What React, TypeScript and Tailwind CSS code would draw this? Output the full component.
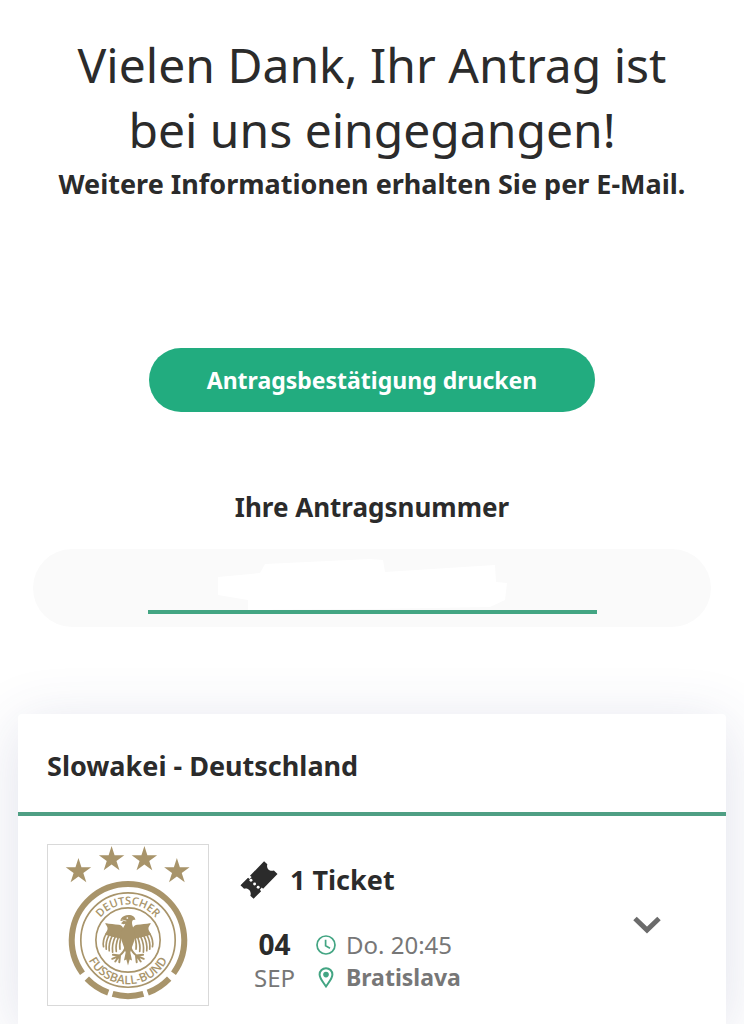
import React from "react";

const GOLD = "#a8946a";

const STARS: [number, number][] = [
  [115, 102],
  [214, 66],
  [312, 66],
  [409, 102],
];

function starPoints(cx: number, cy: number, r: number) {
  return Array.from({ length: 10 }, (_, i) => {
    const radius = i % 2 === 0 ? r : r * 0.38;
    const a = (Math.PI / 5) * i - Math.PI / 2;
    return `${(cx + radius * Math.cos(a)).toFixed(1)},${(cy + radius * Math.sin(a)).toFixed(1)}`;
  }).join(" ");
}

function Wing() {
  return (
    <>
      <path
        d="M253 279 C248 270 246 262 236 261 C222 260 210 259 195 256 C196 262 203 266 202 274 C201 280 196 284 195 291 L216 297 L242 303 L254 300 Z"
        fill={GOLD}
      />
      <path
        d="M198 288 C191 300 187 314 190 327 M207 291 C200 304 196 319 198 334 M216 294 C209 308 205 324 207 339 M225 297 C219 310 215 327 217 343 M234 299 C229 312 226 328 228 341 M242 300 C239 311 237 323 239 334"
        fill="none"
        stroke={GOLD}
        strokeWidth="5"
        strokeLinecap="round"
      />
      <path
        d="M256 326 C253 338 247 346 238 353 M238 353 L218 351 M236 354 L216 363 M237 354 L225 371 M239 354 L237 373"
        fill="none"
        stroke={GOLD}
        strokeWidth="6"
        strokeLinecap="round"
      />
    </>
  );
}

function Crest() {
  return (
    <svg viewBox="24 23 478 478" className="size-full" role="img" aria-label="Deutscher Fussball-Bund">
      <defs>
        <path id="crest-top" d="M157 307 A106 106 0 0 1 369 307" />
        <path id="crest-bottom" d="M131 307 A132 132 0 0 0 395 307" />
      </defs>
      {STARS.map(([x, y]) => (
        <polygon key={x} points={starPoints(x, y, 40)} fill={GOLD} />
      ))}
      <g fill="none" stroke={GOLD}>
        <path
          d="M127 406 A168 168 0 1 1 399 406 M386 422 A168 168 0 0 1 322 464 M309 468 A168 168 0 0 1 217 468 M204 464 A168 168 0 0 1 140 422"
          strokeWidth="18"
        />
        <circle cx="263" cy="307" r="141" strokeWidth="5" />
        <circle cx="263" cy="307" r="96" strokeWidth="5" />
      </g>
      <g fill={GOLD} fontFamily="'Open Sans', sans-serif" fontWeight="600" textAnchor="middle">
        <text fontSize="33">
          <textPath href="#crest-top" startOffset="50%">DEUTSCHER</textPath>
        </text>
        <text fontSize="36">
          <textPath href="#crest-bottom" startOffset="50%">FUSSBALL-BUND</textPath>
        </text>
      </g>
      <Wing />
      <g transform="translate(526 0) scale(-1 1)">
        <Wing />
      </g>
      <path
        d="M242 243 C247 236 255 232 265 232 C276 232 284 237 285 247 C279 244 275 248 275 255 C275 266 284 278 284 293 C283 313 274 326 270 344 L275 368 L268 365 L263 383 L258 365 L251 368 L256 344 C252 326 243 313 242 293 C242 278 251 268 255 258 C251 260 246 260 242 257 L249 251 L240 249 Z"
        fill={GOLD}
      />
      <path d="M244 247 L258 250" stroke="#fff" strokeWidth="2" />
      <circle cx="261" cy="241" r="2.5" fill="#fff" />
    </svg>
  );
}

function TicketIcon() {
  return (
    <svg viewBox="29 32 115 116" className="size-[38px] shrink-0" aria-hidden="true">
      <path
        d="M102 33 L112 42 C108 53 118 66 132 61 L143 72 L99 117 L95 113 L89 120 L93 124 L70 147 L60 138 C65 126 54 112 41 117 L30 106 L53 83 L58 87 L64 81 L59 77 Z"
        fill="#2b2b2b"
      />
      <g fill="#fff">
        <circle cx="62" cy="91" r="4.5" />
        <circle cx="73" cy="102" r="4.5" />
        <circle cx="84" cy="112" r="4.5" />
      </g>
    </svg>
  );
}

function ClockIcon() {
  return (
    <svg viewBox="0 0 20 20" className="size-5" fill="none" stroke="#43a583" strokeWidth="1.7" aria-hidden="true">
      <circle cx="10" cy="10" r="9" />
      <path d="M9.6 4.8v6l4.4 2.4" />
    </svg>
  );
}

function PinIcon() {
  return (
    <svg viewBox="0 0 16 21" className="h-[21px] w-4" aria-hidden="true">
      <path
        d="M8 19.4C5 15 1.6 11.6 1.6 7.6a6.4 6.4 0 0 1 12.8 0C14.4 11.6 11 15 8 19.4Z"
        fill="none"
        stroke="#43a583"
        strokeWidth="2"
      />
      <circle cx="8" cy="7.6" r="2.8" fill="#43a583" />
    </svg>
  );
}

export default function App() {
  return (
    <main className="min-h-screen overflow-hidden bg-white px-[18px] pt-8 font-['Noto_Sans',sans-serif] text-[#2b2b2b]">
      <header className="text-center">
        <h1 className="text-[48px] leading-[65px]">
          Vielen Dank, Ihr Antrag ist
          <br />
          bei uns eingegangen!
        </h1>
        <p className="mt-[2px] text-[27px] leading-10 font-bold">Weitere Informationen erhalten Sie per E-Mail.</p>
      </header>

      <div className="mt-36 flex justify-center">
        <button type="button" className="h-16 w-[446px] max-w-full rounded-full bg-[#22ac7f] text-[23px] font-bold text-white">
          Antragsbestätigung drucken
        </button>
      </div>

      <section className="mt-[75px] flex flex-col items-center px-[15px]">
        <label htmlFor="request-number" className="text-[26px] leading-10 font-bold">
          Ihre Antragsnummer
        </label>
        <div className="relative mt-[22px] flex h-[78px] w-full justify-center rounded-full bg-[#fafafa]">
          <input
            id="request-number"
            readOnly
            className="h-[65px] w-[449px] max-w-full border-b-4 border-[#43a583] bg-transparent text-center text-[27px] outline-none"
          />
          <svg viewBox="0 0 289 51" className="absolute top-[10px] left-1/2 h-[51px] w-[289px] -translate-x-[154px]" aria-hidden="true">
            <path
              d="M0 18 L42 14 L47 5 L152 0 L165 1 L167 13 L277 6 L278 23 L289 24 L287 41 L272 48 L152 50 L30 51 L30 41 L0 36 Z"
              fill="#fff"
            />
          </svg>
        </div>
      </section>

      <article className="mt-[87px] rounded-t bg-white shadow-[0_10px_60px_rgba(60,70,130,0.16)]">
        <h2 className="border-b-4 border-[#4f9f84] px-[29px] pt-8 pb-[26px] text-[27px] leading-10 font-bold">
          Slowakei - Deutschland
        </h2>
        <div className="flex items-center px-[29px] pt-[28px] pb-[18px]">
          <div className="size-[162px] shrink-0 border border-[#d9d9d9]">
            <Crest />
          </div>
          <div className="ml-[31px] flex-1 pt-1">
            <div className="flex items-center gap-3 text-[27px] leading-10 font-bold">
              <TicketIcon />
              1 Ticket
            </div>
            <div className="mt-7 flex gap-[18px]">
              <div className="w-[58px] pl-[11px] text-center leading-[33px]">
                <div className="text-[28px] font-bold">04</div>
                <div className="text-[24px] text-[#777]">SEP</div>
              </div>
              <div className="text-[24px] leading-[33px] text-[#777]">
                <div className="flex items-center gap-[10px]">
                  <span className="flex w-5 justify-center">
                    <ClockIcon />
                  </span>
                  Do. 20:45
                </div>
                <div className="flex items-center gap-[10px] text-[23px] font-bold">
                  <span className="flex w-5 justify-center">
                    <PinIcon />
                  </span>
                  Bratislava
                </div>
              </div>
            </div>
          </div>
          <button type="button" aria-label="Details anzeigen" className="mr-9 shrink-0">
            <svg viewBox="0 0 28 18" className="h-[18px] w-7" fill="none" stroke="#6b6b6b" strokeWidth="5" aria-hidden="true">
              <path d="M2 2.5 L14 14 L26 2.5" />
            </svg>
          </button>
        </div>
      </article>
    </main>
  );
}
